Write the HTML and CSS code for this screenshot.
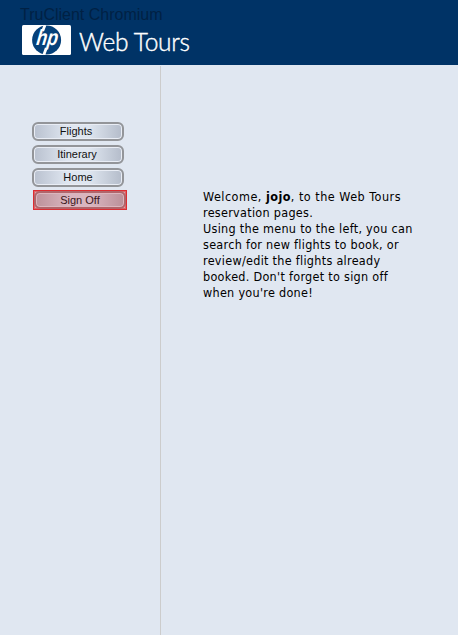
FILE: index.html
```html
<!DOCTYPE html>
<html lang="en">
<head>
<meta charset="utf-8">
<title>Web Tours</title>
<link rel="stylesheet" href="styles.css">
</head>
<body>
<header class="header">
  <div class="watermark">TruClient Chromium</div>
  <div class="brand">
    <svg class="logo" width="49" height="30" viewBox="22 25 49 30">
      <rect x="22" y="25" width="49" height="30" rx="1.5" fill="#fff"/>
      <circle cx="46.6" cy="40" r="14.5" fill="#05417a"/>
      <path d="M45 25 L42.7 31 M46.3 48 L43.8 55" stroke="#fff" stroke-width="2.8"/>
      <text class="logo-text" transform="translate(35.8 45) skewX(-8)" textLength="21.5" lengthAdjust="spacingAndGlyphs">hp</text>
    </svg>
    <svg class="title" width="113" height="32">
      <text class="title-text" x="0" y="25.5" textLength="111">Web Tours</text>
    </svg>
  </div>
</header>
<div class="layout">
  <nav class="menu">
    <a class="button flights">Flights</a>
    <a class="button itinerary">Itinerary</a>
    <a class="button">Home</a>
    <div class="highlight"><a class="button selected">Sign Off</a></div>
  </nav>
  <main class="content">
    <div class="line greeting">Welcome, <b>jojo</b>, to the Web Tours</div>
    <div class="line">reservation pages.</div>
    <div class="line">Using the menu to the left, you can</div>
    <div class="line">search for new flights to book, or</div>
    <div class="line">review/edit the flights already</div>
    <div class="line">booked. Don't forget to sign off</div>
    <div class="line">when you're done!</div>
  </main>
</div>
</body>
</html>
```
FILE: styles.css
```css
* { box-sizing: border-box; }
body {
  margin: 0;
  height: 635px;
  display: flex;
  flex-direction: column;
  background: #e0e7f1;
  overflow: hidden;
}
.header {
  height: 65px;
  flex: none;
  padding: 6px 0 0 20px;
  background: #003366;
}
.watermark {
  height: 19px;
  font: 16px/18px "Liberation Sans", sans-serif;
  color: #002144;
  white-space: nowrap;
}
.brand { display: flex; padding-left: 2px; gap: 8px; }
.logo-text { font: italic bold 22px "Liberation Sans", sans-serif; fill: #fff; }
.title-text { font: 300 24.5px Lato, sans-serif; fill: #fff; stroke: #fff; stroke-width: .4px; }
.layout { flex: 1; display: flex; }
.menu {
  width: 161px;
  flex: none;
  margin-top: 1px;
  padding: 56px 0 0 32px;
  border-right: 1px solid #cccccc;
  display: flex;
  flex-direction: column;
  gap: 4px;
}
.button {
  display: block;
  width: 92px;
  height: 19px;
  border: 2px solid #939599;
  border-radius: 6px;
  box-shadow: inset 0 0 0 1px #e9edf5;
  background: linear-gradient(90deg, #b9c1cf, #dfe6f0 38%, #dfe6f0 62%, #b4bcca);
  font: 11px/15px "Liberation Sans", sans-serif;
  color: #111;
  text-align: center;
}
.flights { padding-right: 4px; }
.itinerary { padding-right: 2px; }
.highlight {
  width: 94px;
  height: 20px;
  margin: -1px 0 0 1px;
  border: 1px solid #dc2d32;
  background: #d9a8b0;
  box-shadow: inset 0 0 0 1px #df6468;
}
.selected {
  height: 18px;
  border-color: #b0656b;
  box-shadow: inset 0 0 0 1px #dcb5bd;
  background: linear-gradient(90deg, #bd929b, #d9b5bf 38%, #d9b5bf 62%, #bb9099);
  color: #39151b;
}
.content {
  padding: 124px 0 0 42px;
  font: 12.5px/16px "DejaVu Sans Condensed", "DejaVu Sans", sans-serif;
  font-stretch: condensed;
  letter-spacing: .29px;
  color: #000;
  white-space: nowrap;
}
.line { height: 16px; }
.greeting { letter-spacing: .5px; }
.greeting b { letter-spacing: .4px; }
```
